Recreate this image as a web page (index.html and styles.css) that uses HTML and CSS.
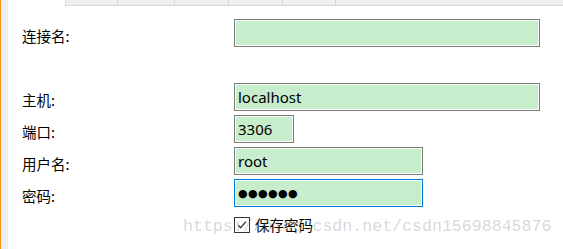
FILE: index.html
```html
<!DOCTYPE html>
<html lang="zh">
<head>
<meta charset="utf-8">
<title>连接</title>
<link rel="stylesheet" href="styles.css">
</head>
<body>
<div class="window">
  <div class="stripe"></div>
  <div class="side"></div>
  <div class="main">
    <div class="tabs">
      <div class="tab t1"></div>
      <div class="tab t2"></div>
      <div class="tab t3"></div>
      <div class="tab t4"></div>
      <div class="tab t5"></div>
      <div class="tab rest"></div>
    </div>
    <div class="form">
      <div class="label first">连接名:</div>
      <div class="field wide first"></div>
      <div class="label">主机:</div>
      <div class="field wide">localhost</div>
      <div class="label">端口:</div>
      <div class="field port">3306</div>
      <div class="label">用户名:</div>
      <div class="field mid">root</div>
      <div class="label">密码:</div>
      <div class="field mid focus"><span class="dots">●●●●●●</span></div>
      <div class="check-row">
        <span class="box"><svg width="14" height="14" viewBox="0 0 14 14"><path d="M3 7.2 L5.6 9.8 L11 3.6" fill="none" stroke="#333" stroke-width="1.3"/></svg></span>
        <span class="check-label">保存密码</span>
      </div>
    </div>
    <div class="watermark">https://blog.csdn.net/csdn15698845876</div>
  </div>
</div>
</body>
</html>
```
FILE: styles.css
```css
html, body {
  margin: 0;
  padding: 0;
  background: #fff;
}
body {
  width: 563px;
  height: 249px;
  overflow: hidden;
  font-family: "Noto Sans CJK SC", "Noto Sans", sans-serif;
}
.window {
  display: flex;
  height: 249px;
}
.stripe {
  width: 1px;
  background: #f0961e;
}
.side {
  width: 7px;
  background: #eeeeee;
}
.main {
  flex: 1;
  position: relative;
}
.tabs {
  display: flex;
  margin-left: 57px;
  height: 5px;
  background: #efefef;
  border-bottom: 1px solid #d9d9d9;
  border-left: 1px solid #d9d9d9;
}
.tab {
  border-right: 1px solid #d9d9d9;
}
.t1 { width: 51px; }
.t2 { width: 56px; }
.t3 { width: 53px; }
.t4 { width: 53px; }
.t5 { width: 52px; }
.rest { flex: 1; border-right: none; }

.form {
  display: grid;
  grid-template-columns: 212px auto;
  row-gap: 4px;
  padding: 13px 0 0 14px;
  align-items: start;
}
.label {
  height: 28px;
  padding-top: 4px;
  box-sizing: border-box;
  display: flex;
  align-items: center;
  font-size: 14.5px;
  color: #000;
}
.first {
  margin-bottom: 32px;
}
.field {
  height: 28px;
  box-sizing: border-box;
  border: 1px solid #7a7a7a;
  box-shadow: inset 0 0 0 1px #fff;
  background: #c7edcc;
  display: flex;
  align-items: center;
  padding-left: 3px;
  font-family: "Noto Sans", sans-serif;
  font-size: 15px;
  color: #000;
}
.wide { width: 306px; }
.port { width: 60px; }
.mid { width: 189px; }
.focus { border-color: #0078d7; }
.dots {
  font-family: "DejaVu Sans", sans-serif;
  font-size: 11px;
  letter-spacing: 0.4px;
  padding-top: 1px;
}
.check-row {
  grid-column: 2;
  margin-top: 6px;
  display: flex;
  align-items: center;
  gap: 5px;
}
.box {
  width: 16px;
  height: 16px;
  box-sizing: border-box;
  border: 1px solid #333;
  background: #fff;
  display: flex;
  align-items: center;
  justify-content: center;
}
.box svg { display: block; }
.check-label {
  font-size: 14.5px;
  color: #000;
  line-height: 16px;
}
.watermark {
  position: absolute;
  left: 175px;
  top: 217px;
  font-family: "Liberation Mono", monospace;
  font-size: 16.6px;
  color: rgba(120, 120, 120, 0.3);
  white-space: nowrap;
  pointer-events: none;
}
```
